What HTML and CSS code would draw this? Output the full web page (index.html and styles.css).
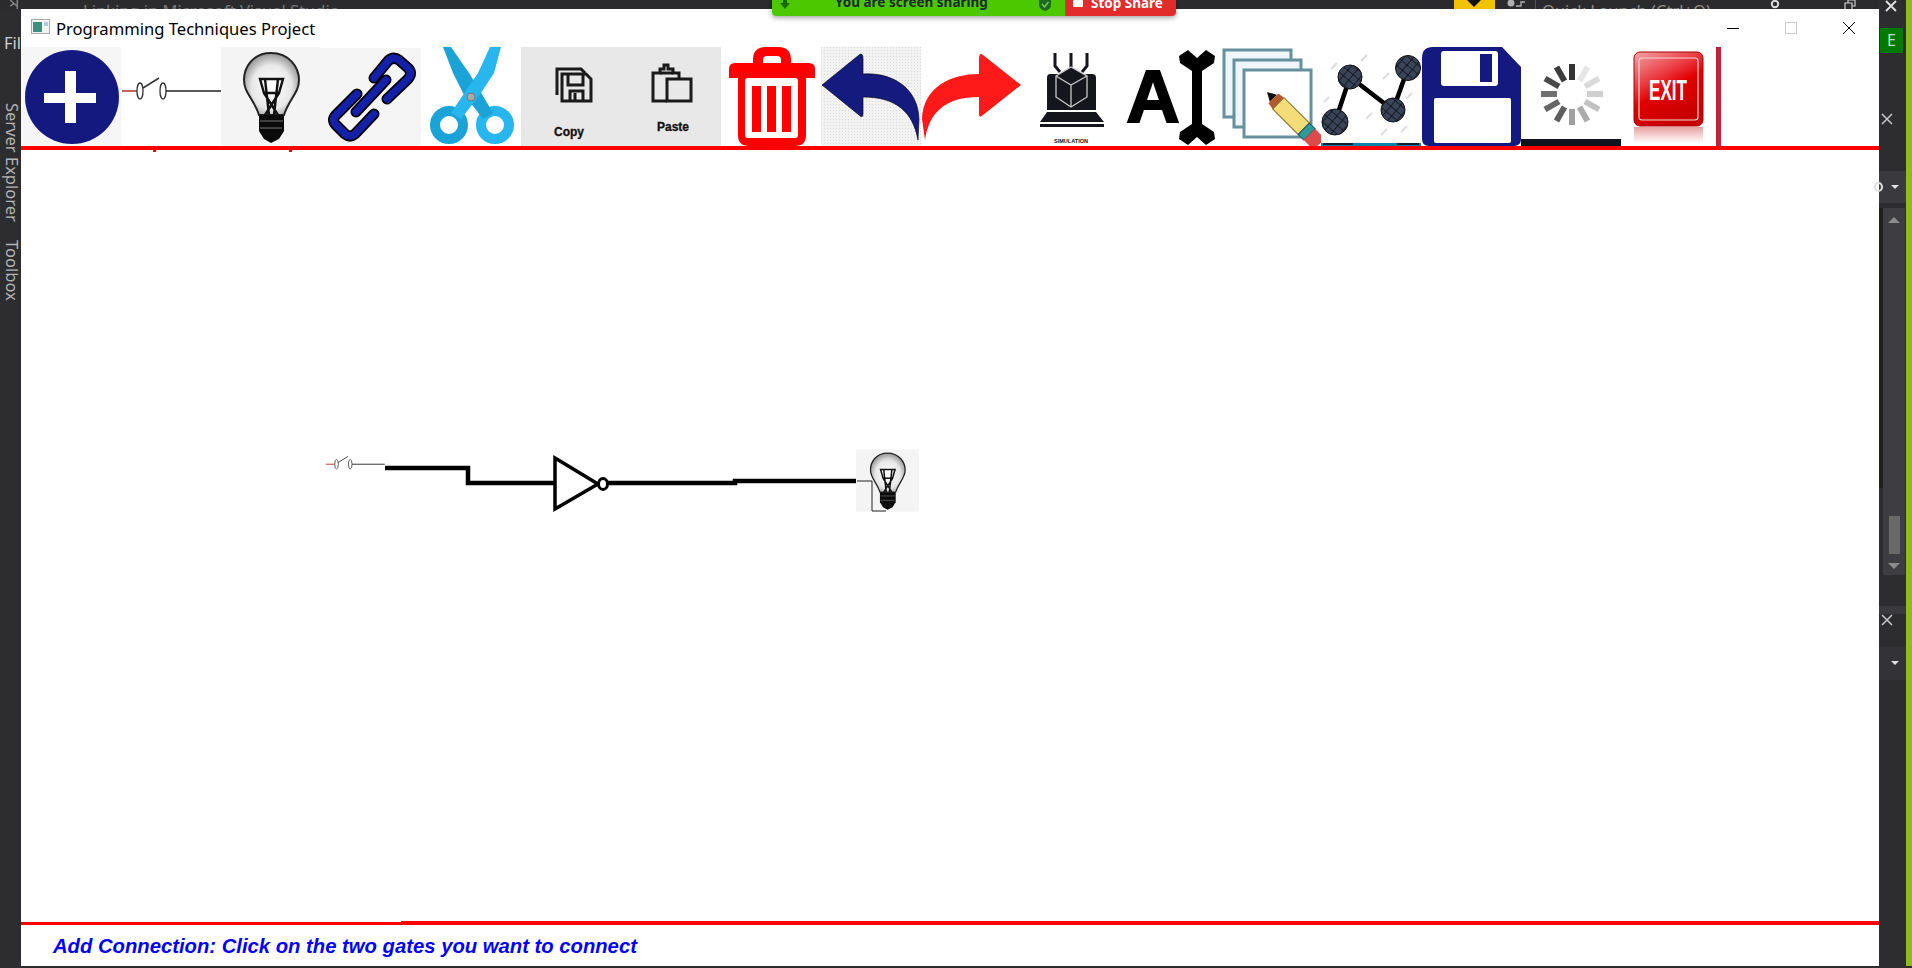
FILE: index.html
```html
<!DOCTYPE html>
<html lang="en">
<head>
    <meta charset="UTF-8">
    <title>Programming Techniques Project</title>
    <link rel="stylesheet" href="styles.css">
</head>
<body>
<!-- shared drawings, used by the toolbar and by the circuit -->
<svg class="defs" width="0" height="0">
    <defs>
        <radialGradient id="glass" cx="50%" cy="55%" r="60%">
            <stop offset="0" stop-color="#ffffff"/>
            <stop offset="0.6" stop-color="#e8e8e8"/>
            <stop offset="1" stop-color="#7e7e7e"/>
        </radialGradient>
        <linearGradient id="exitRed" x1="0" y1="0" x2="0.5" y2="1">
            <stop offset="0" stop-color="#f2a6aa"/>
            <stop offset="0.42" stop-color="#e9353b"/>
            <stop offset="0.6" stop-color="#e00000"/>
            <stop offset="1" stop-color="#c80000"/>
        </linearGradient>
        <linearGradient id="exitFade" x1="0" y1="0" x2="0" y2="1">
            <stop offset="0" stop-color="#e8a0a0"/>
            <stop offset="1" stop-color="#ffffff"/>
        </linearGradient>
        <pattern id="hatch" width="7" height="7" patternUnits="userSpaceOnUse" patternTransform="rotate(40)">
            <rect width="7" height="7" fill="#3a4459"/>
            <path d="M0 0H7M0 0V7" stroke="#0c0f18" stroke-width="1.6"/>
        </pattern>
        <symbol id="bulb" viewBox="0 0 100 99">
            <rect width="100" height="99" fill="#f4f4f4"/>
            <path d="M50 6C32 6 23 20 23 33C23 46 33 52 38 68L63 68C68 52 78 46 78 33C78 20 68 6 50 6Z" fill="url(#glass)" stroke="#222" stroke-width="2"/>
            <path d="M39 32L62 32L58 46L43 46Z M44 32L48 68M57 32L53 68M43 46L57 68M58 46L44 68" fill="none" stroke="#111" stroke-width="2.400"/>
            <path d="M38 68H63V84L58 92L50 96L43 92L38 84Z" fill="#0a0a0a"/>
            <path d="M39 74H62M39 81H61" stroke="#777" stroke-width="1"/>
        </symbol>
        <symbol id="switch" viewBox="0 0 100 99">
            <path d="M1 44H16" stroke="#a33" stroke-width="1.5"/>
            <ellipse cx="19" cy="44" rx="3" ry="8" fill="#fff" stroke="#333" stroke-width="1.3"/>
            <path d="M22 41L38 31" stroke="#333" stroke-width="1.5"/>
            <ellipse cx="42" cy="44" rx="3" ry="8" fill="#fff" stroke="#333" stroke-width="1.3"/>
            <path d="M45 44H100" stroke="#222" stroke-width="1.5"/>
        </symbol>
    </defs>
</svg>

<div class="vs-top">
    <svg class="vs-logo" viewBox="0 0 30 20"><path d="M4 0L20 14M4 14L12 8M20 0V20" fill="none" stroke="#8a8a8a" stroke-width="3"/></svg>
    <span class="vs-title">Linking in Microsoft Visual Studio</span>
    <span class="vs-notify"><i></i></span>
    <svg class="vs-person" viewBox="0 0 22 9"><circle cx="6" cy="3" r="3.5" fill="#b0b0b0"/><path d="M11 6H16V2H20" fill="none" stroke="#b0b0b0" stroke-width="1.3"/></svg>
    <span class="vs-search">Quick Launch (Ctrl+Q)</span>
    <svg class="vs-user" viewBox="0 0 12 9"><circle cx="6" cy="4" r="3.2" fill="none" stroke="#ddd" stroke-width="2"/></svg>
    <svg class="vs-restore" viewBox="0 0 12 9"><path d="M1 9V3H8V9M4 3V0H11V6H8" fill="none" stroke="#ccc" stroke-width="1.2"/></svg>
</div>

<div class="share-bar">
    <div class="share-info">
        <svg class="share-arrow" viewBox="0 0 10 12"><path d="M3 0H7V5H10L5 11L0 5H3Z" fill="#176b00"/></svg>
        <span class="share-text">You are screen sharing</span>
        <svg class="share-shield" viewBox="0 0 12 12"><path d="M0 0H12V6Q12 10 6 12Q0 10 0 6Z" fill="#1d6b22"/><path d="M3 5L5.500 8L9.500 3" fill="none" stroke="#7bcf5c" stroke-width="1.3"/></svg>
    </div>
    <div class="share-stop"><i></i>Stop Share</div>
</div>

<div class="desk">
    <div class="rail-left">
        <span class="rail-file">File</span>
        <span class="rail-tab">Server Explorer</span>
        <span class="rail-tab">Toolbox</span>
    </div>

    <div class="window">
        <div class="titlebar">
            <svg class="app-icon" viewBox="0 0 19 15">
                <rect x="0.5" y="0.5" width="18" height="14" fill="#f2f2f2" stroke="#a9a9a9"/>
                <rect x="2" y="3" width="9" height="10" fill="#3f8f7f"/>
                <rect x="13" y="3" width="4" height="4" fill="#b7c9d4"/>
            </svg>
            <span class="app-name">Programming Techniques Project</span>
            <div class="win-buttons">
                <svg viewBox="0 0 14 14"><path d="M1 7.500H13" stroke="#000"/></svg>
                <svg viewBox="0 0 14 14"><rect x="1.500" y="1.500" width="11" height="11" fill="none" stroke="#ccc"/></svg>
                <svg viewBox="0 0 14 14"><path d="M1 1L13 13M13 1L1 13" stroke="#000"/></svg>
            </div>
        </div>

        <div class="toolbar">
            <!-- add gate -->
            <svg class="tool" viewBox="0 0 100 99">
                <rect width="100" height="99" fill="#f6f6f6"/>
                <ellipse cx="51" cy="50" rx="47" ry="47" fill="#14197f"/>
                <path d="M23 46H44V24H55V46H75V56H55V76H44V56H23Z" fill="#fff"/>
            </svg>
            <svg class="tool" viewBox="0 0 100 99"><use href="#switch"/></svg>
            <svg class="tool" viewBox="0 0 100 99"><use href="#bulb"/></svg>
            <!-- connection -->
            <svg class="tool" viewBox="0 0 100 99">
                <rect y="1" width="100" height="98" fill="#f5f5f5"/>
                <g fill="none" stroke-linecap="round" stroke-linejoin="round">
                    <g stroke="#000" stroke-width="11">
                        <path d="M53 31L67 14Q72 9 78 13L87 21Q92 26 87 32L66 52"/>
                        <path d="M53 67L34 87Q29 91 24 87L15 78Q10 73 15 68L36 47"/>
                        <path d="M35 65L65 33"/>
                    </g>
                    <g stroke="#1420a8" stroke-width="7.500">
                        <path d="M53 31L67 14Q72 9 78 13L87 21Q92 26 87 32L66 52"/>
                        <path d="M53 67L34 87Q29 91 24 87L15 78Q10 73 15 68L36 47"/>
                        <path d="M35 65L65 33"/>
                    </g>
                </g>
            </svg>
            <!-- cut -->
            <svg class="tool" viewBox="0 0 100 99">
                <rect width="100" height="99" fill="#fff"/>
                <circle cx="28" cy="78" r="14" fill="none" stroke="#1ba3d8" stroke-width="10"/>
                <circle cx="74" cy="78" r="14" fill="none" stroke="#27b6ee" stroke-width="10"/>
                <path d="M22 0L30 0L48 26L58 42L72 66L62 72L42 46L32 26Z" fill="#1ba3d8"/>
                <path d="M80 0L69 0L57 26L46 42L30 66L40 72L60 46L73 26Z" fill="#27b6ee"/>
                <circle cx="50" cy="50" r="4" fill="#a9a9a9" stroke="#777"/>
            </svg>
            <!-- copy -->
            <svg class="tool" viewBox="0 0 100 99">
                <rect width="100" height="99" fill="#e8e8e8"/>
                <g fill="none" stroke="#1a1a1a" stroke-width="3">
                    <path d="M36 48V22H60L64 26"/>
                    <path d="M41 54V27H65L70 32V54Z"/>
                    <path d="M47 28V38H62V28M49 54V44H62V54M54 46V54"/>
                </g>
                <text class="tool-label" x="48" y="89">Copy</text>
            </svg>
            <!-- paste -->
            <svg class="tool" viewBox="0 0 100 99">
                <rect width="100" height="99" fill="#e8e8e8"/>
                <g fill="none" stroke="#1a1a1a" stroke-width="3">
                    <path d="M46 54H32V26H39V22H43V18H47V22H52V26H58V31"/>
                    <rect x="46" y="32" width="24" height="22"/>
                    <path d="M39 26H52"/>
                </g>
                <text class="tool-label" x="52" y="84">Paste</text>
            </svg>
            <!-- delete -->
            <svg class="tool" viewBox="0 0 100 99">
                <rect width="100" height="99" fill="#fff"/>
                <path d="M32 20V13Q32 0 45 0H57Q70 0 70 13V20H60V13Q60 9 56 9H46Q42 9 42 13V20Z" fill="#f00"/>
                <path d="M14 16H88Q94 16 94 22V31H8V22Q8 16 14 16Z" fill="#f00"/>
                <path d="M17 29H85V88Q85 99 74 99H28Q17 99 17 88Z" fill="#f00"/>
                <rect x="24" y="31" width="53" height="60" rx="3" fill="#fff"/>
                <path d="M31 39H40V85H31ZM46 39H55V85H46ZM61 39H70V85H61Z" fill="#f00"/>
            </svg>
            <!-- undo -->
            <svg class="tool" viewBox="0 0 100 99">
                <defs>
                    <pattern id="dots" width="3" height="3" patternUnits="userSpaceOnUse">
                        <rect width="3" height="3" fill="#f2f2f2"/>
                        <rect width="1" height="1" fill="#dcdcdc"/>
                    </pattern>
                </defs>
                <rect width="100" height="99" fill="url(#dots)"/>
                <path d="M1 38L38 8Q42 5 42 12L42 27C70 25 97 40 98 72L97 93C92 65 75 50 42 50L42 67Q42 72 38 68Z" fill="#151a7e" stroke="#000" stroke-width="0.600"/>
            </svg>
            <!-- redo -->
            <svg class="tool" viewBox="0 0 100 99">
                <rect width="100" height="99" fill="#fff"/>
                <path d="M100 38L62 8Q58 5 58 12L58 27C30 27 2 40 1 72L4 93C8 65 25 50 58 50L58 67Q58 72 62 68Z" fill="#ff1a1a"/>
            </svg>
            <!-- simulation -->
            <svg class="tool" viewBox="0 0 100 99">
                <rect width="100" height="99" fill="#fff"/>
                <path d="M34 6V19L39 25M50 6V21M66 6V19L61 25" fill="none" stroke="#15151c" stroke-width="3"/>
                <path d="M29 27H71Q75 27 75 31V63H26V31Q26 27 29 27Z" fill="#15151c"/>
                <path d="M50 20L66 29V50L50 60L35 50V29Z" fill="#15151c" stroke="#c9c9c9" stroke-width="1.300"/>
                <path d="M35 29L50 38L66 29M50 38V60" fill="none" stroke="#c9c9c9" stroke-width="1.300"/>
                <path d="M26 65H75L83 75H19Z" fill="#15151c"/>
                <rect x="19" y="77" width="64" height="3" fill="#15151c"/>
                <text class="sim-label" x="50" y="96">SIMULATION</text>
            </svg>
            <!-- label -->
            <svg class="tool" viewBox="0 0 100 99">
                <rect width="100" height="99" fill="#fff"/>
                <text class="label-a" x="32" y="75">A</text>
                <path d="M58 9L67 3L76 11L85 3L94 9L93 16L81 24V77L93 85L94 92L85 98L76 90L67 98L58 92L59 85L71 77V24L59 16Z" fill="#000"/>
            </svg>
            <!-- edit -->
            <svg class="tool" viewBox="0 0 100 99">
                <rect width="100" height="99" fill="#fff"/>
                <g stroke="#65909c" stroke-width="3">
                    <rect x="3" y="3" width="67" height="67" fill="#eef6fc"/>
                    <rect x="13" y="13" width="67" height="67" fill="#eef6fc"/>
                    <rect x="23" y="23" width="67" height="67" fill="#fff"/>
                </g>
                <g transform="translate(46 45) rotate(45)">
                    <path d="M0 0L9 -5V5Z" fill="#111"/>
                    <path d="M9 -7L16 -8V8L9 7Z" fill="#b5592e"/>
                    <rect x="16" y="-8" width="36" height="16" fill="#f4dc78" stroke="#7d6a28"/>
                    <rect x="52" y="-8" width="8" height="16" fill="#2f9c93" stroke="#1e4e70"/>
                    <path d="M60 -8H68Q74 -6 74 0Q74 6 68 8H60Z" fill="#dc4a4a"/>
                </g>
            </svg>
            <!-- graph -->
            <svg class="tool" viewBox="0 0 100 99">
                <rect width="100" height="99" fill="#fff"/>
                <path d="M10 22L16 16M40 14L46 8M62 32L68 26M85 52L91 46M60 88L66 82M8 50L3 55M45 72L51 66M80 85L86 79" stroke="#ddd" stroke-width="2"/>
                <path d="M14 75L29 30L72 63L87 21" fill="none" stroke="#000" stroke-width="4.500"/>
                <g fill="url(#hatch)" stroke="#111" stroke-width="1">
                    <circle cx="29" cy="30" r="12"/>
                    <circle cx="14" cy="75" r="13"/>
                    <circle cx="72" cy="63" r="12"/>
                    <circle cx="87" cy="21" r="12.500"/>
                </g>
                <rect y="96" width="100" height="3" fill="#0e7fa8"/>
                <path d="M2 97H32M76 97H98" stroke="#0b2034" stroke-width="2"/>
            </svg>
            <!-- save -->
            <svg class="tool" viewBox="0 0 100 99">
                <rect width="100" height="99" fill="#fff"/>
                <path d="M12 0H81L100 20V92Q100 99 93 99H8Q1 99 1 92V11Q1 0 12 0Z" fill="#14197f"/>
                <rect x="20" y="4" width="57" height="35" rx="3" fill="#fff"/>
                <rect x="59" y="7" width="12" height="28" fill="#14197f"/>
                <rect x="13" y="51" width="77" height="45" rx="2" fill="#fff"/>
            </svg>
            <!-- load -->
            <svg class="tool" viewBox="0 0 100 99">
                <rect width="100" height="99" fill="#fff"/>
                <g stroke-width="6">
                    <path d="M51 33V17" stroke="#333"/>
                    <path d="M58.500 34L66.500 20" stroke="#e6e6e6"/>
                    <path d="M64 39.500L78 31.500" stroke="#dadada"/>
                    <path d="M66 47H82" stroke="#cfcfcf"/>
                    <path d="M64 54.500L78 62.500" stroke="#c2c2c2"/>
                    <path d="M58.500 60L66.500 74" stroke="#ababab"/>
                    <path d="M51 62V78" stroke="#a0a0a0"/>
                    <path d="M43.500 60L35.500 74" stroke="#5e5e5e"/>
                    <path d="M38 54.500L24 62.500" stroke="#666"/>
                    <path d="M36 47H20" stroke="#707070"/>
                    <path d="M38 39.500L24 31.500" stroke="#4a4a4a"/>
                    <path d="M43.500 34L35.500 20" stroke="#3c3c3c"/>
                </g>
                <rect y="92" width="100" height="7" fill="#11131c"/>
            </svg>
            <!-- exit -->
            <svg class="tool" viewBox="0 0 100 99">
                <rect width="100" height="99" fill="#fff"/>
                <rect x="13" y="80" width="69" height="16" fill="url(#exitFade)"/>
                <rect x="13" y="5" width="69" height="74" rx="6" fill="url(#exitRed)" stroke="#a80000"/>
                <rect x="18" y="11" width="59" height="62" rx="3" fill="none" stroke="#f6d6d6" stroke-width="1.200"/>
                <text class="exit-label" x="47" y="53" textLength="38" lengthAdjust="spacingAndGlyphs">EXIT</text>
                <rect x="95" width="5" height="99" fill="#c8203a"/>
            </svg>
        </div>
        <div class="toolbar-line"><i></i><i></i></div>

        <div class="canvas">
            <!-- viewBox keeps screen coordinates, the nodes sit free on this sheet -->
            <svg class="circuit" viewBox="21 150 1858 771">
                <use href="#switch" x="325" y="438" width="60" height="59"/>
                <path d="M385 468H468V483H555" fill="none" stroke="#000" stroke-width="4.500"/>
                <path d="M555 458L598 484L555 509Z" fill="#fff" stroke="#000" stroke-width="3.500"/>
                <ellipse cx="603" cy="484" rx="4.500" ry="5.500" fill="#fff" stroke="#000" stroke-width="3"/>
                <path d="M608 483H735V481H857" fill="none" stroke="#000" stroke-width="4.500"/>
                <use href="#bulb" x="856" y="449" width="63" height="63"/>
                <path d="M857 481H872V511H886" fill="none" stroke="#222" stroke-width="1"/>
            </svg>
        </div>

        <div class="statusbar">
            <span class="status-text">Add Connection: Click on the two gates you want to connect</span>
        </div>
    </div>

    <div class="rail-right">
        <div class="rail-panel">
            <svg class="rail-x top-x" viewBox="0 0 12 12"><path d="M1 1L11 11M11 1L1 11" stroke="#e0e0e0" stroke-width="1.800"/></svg>
            <span class="rail-e">E</span>
            <svg class="rail-x pane-x" viewBox="0 0 12 12"><path d="M1 1L11 11M11 1L1 11" stroke="#c8c8c8" stroke-width="1.500"/></svg>
            <div class="rail-combo"><b></b><i></i></div>
            <div class="rail-scroll">
                <i class="arrow-up"></i>
                <i class="thumb"></i>
                <i class="arrow-down"></i>
            </div>
            <div class="rail-sep"></div>
            <svg class="rail-x pane-x2" viewBox="0 0 12 12"><path d="M1 1L11 11M11 1L1 11" stroke="#c8c8c8" stroke-width="1.500"/></svg>
            <div class="rail-combo low"><i></i></div>
        </div>
        <div class="rail-lime"></div>
    </div>
</div>
</body>
</html>
```

FILE: styles.css
```css
html, body {
    margin: 0;
    padding: 0;
}
body {
    position: relative;
    width: 1912px;
    height: 968px;
    overflow: hidden;
    background: #2d2d30;
    font-family: "Noto Sans", "Liberation Sans", sans-serif;
}
.defs {
    position: absolute;
}

/* visual studio behind the window */
.vs-top {
    display: flex;
    align-items: flex-start;
    height: 9px;
    overflow: hidden;
    background: #2b2b2e;
    color: #8b8b8b;
    font-size: 16.500px;
    line-height: 22px;
}
.vs-logo {
    width: 14px;
    height: 9px;
    margin-left: 8px;
    flex: none;
}
.vs-title {
    height: 9px;
    margin-left: 61px;
    width: 1371px;
    flex: none;
    overflow: hidden;
    color: #77777a;
}
.vs-notify {
    position: relative;
    width: 41px;
    height: 9px;
    background: #f2c200;
    flex: none;
}
.vs-notify i {
    position: absolute;
    left: 13px;
    top: 0;
    border: 7px solid transparent;
    border-top-color: #111;
    border-bottom: 0;
}
.vs-person {
    width: 22px;
    height: 9px;
    margin-left: 10px;
    flex: none;
}
.vs-search {
    height: 9px;
    margin-left: 8px;
    padding-left: 6px;
    border-left: 1px solid #555;
    width: 219px;
    flex: none;
    overflow: hidden;
    color: #8b8b8b;
    white-space: nowrap;
}
.vs-user {
    width: 12px;
    height: 9px;
    margin-left: 8px;
    flex: none;
}
.vs-restore {
    width: 12px;
    height: 9px;
    margin-left: 63px;
    flex: none;
}

/* zoom bar lies over everything */
.share-bar {
    position: absolute;
    left: 772px;
    top: 0;
    display: flex;
    width: 404px;
    height: 16px;
    border-radius: 0 0 4px 4px;
    overflow: hidden;
    box-shadow: 0 2px 5px rgba(0, 0, 0, 0.35);
    font-size: 13.500px;
    font-weight: bold;
    line-height: 16px;
}
.share-info {
    display: flex;
    width: 293px;
    background: #4bc800;
    color: #1c2a30;
}
.share-arrow {
    width: 10px;
    height: 12px;
    margin: -2px 0 0 8px;
}
.share-text {
    margin: -6px 0 0 45px;
    width: 159px;
}
.share-shield {
    width: 12px;
    height: 12px;
    margin: -1px 0 0 45px;
}
.share-stop {
    display: flex;
    flex: 1;
    background: #e32b2b;
    color: #fff;
    line-height: 7px;
}
.share-stop i {
    width: 10px;
    height: 7px;
    margin: 0 8px 0 8px;
    border-radius: 1px;
    background: #fff;
}

/* three columns */
.desk {
    display: flex;
    height: 957px;
}
.rail-left {
    display: flex;
    flex-direction: column;
    width: 21px;
    flex: none;
    overflow: hidden;
    color: #b4b4b4;
    font-size: 16.500px;
}
.rail-file {
    margin: 23px 0 0 4px;
    color: #cfcfcf;
    line-height: 22px;
    white-space: nowrap;
}
.rail-tab {
    writing-mode: vertical-rl;
    margin: 0 0 0 5px;
    white-space: nowrap;
    line-height: 18px;
}
.rail-file + .rail-tab {
    margin-top: 49px;
}
.rail-tab + .rail-tab {
    margin-top: 18px;
}

.window {
    display: flex;
    flex-direction: column;
    width: 1858px;
    flex: none;
    background: #fff;
}
.titlebar {
    display: flex;
    align-items: center;
    height: 38px;
    flex: none;
}
.app-icon {
    width: 19px;
    height: 15px;
    margin: 0 0 4px 10px;
}
.app-name {
    margin: 0 0 0 6px;
    color: #000;
    font-size: 16.600px;
    white-space: nowrap;
}
.win-buttons {
    display: flex;
    gap: 44px;
    margin: 0 0 0 auto;
    padding-right: 23px;
}
.win-buttons svg {
    width: 14px;
    height: 14px;
}
.toolbar {
    display: flex;
    height: 99px;
    flex: none;
}
.tool {
    display: block;
    width: 100px;
    height: 99px;
    flex: none;
}
.tool-label {
    font-family: "Liberation Sans", sans-serif;
    font-size: 12px;
    font-weight: bold;
    text-anchor: middle;
    fill: #111;
    stroke: #111;
    stroke-width: 0.3px;
}
.sim-label {
    font-family: "Liberation Sans", sans-serif;
    font-size: 5.500px;
    font-weight: bold;
    text-anchor: middle;
    fill: #111;
}
.label-a {
    font-family: "Liberation Sans", sans-serif;
    font-size: 74px;
    font-weight: bold;
    text-anchor: middle;
    fill: #000;
    stroke: #000;
    stroke-width: 2px;
}
.exit-label {
    font-family: "Liberation Sans", sans-serif;
    font-size: 30px;
    font-weight: bold;
    text-anchor: middle;
    fill: #fff;
}
.toolbar-line {
    position: relative;
    height: 4px;
    flex: none;
    background: #f00;
}
.toolbar-line i {
    position: absolute;
    top: 4px;
    left: 132px;
    width: 3px;
    height: 2px;
    background: #f00;
}
.toolbar-line i + i {
    left: 268px;
}
.canvas {
    flex: 1;
    min-height: 0;
}
.circuit {
    display: block;
    width: 1858px;
    height: 771px;
}
.statusbar {
    position: relative;
    height: 45px;
    flex: none;
    box-sizing: border-box;
    border-top: 4px solid #f00;
    padding: 10px 0 0 32px;
}
.statusbar::before {
    content: "";
    position: absolute;
    left: 0;
    top: -4px;
    width: 380px;
    height: 1px;
    background: #fff;
}
.status-text {
    color: #0000ff;
    font-family: "Liberation Sans", sans-serif;
    font-size: 20.250px;
    font-style: italic;
    font-weight: bold;
    white-space: nowrap;
}

.rail-right {
    display: flex;
    flex: 1;
}
.rail-panel {
    display: flex;
    flex-direction: column;
    flex: 1;
    background: #2d2d30;
    margin-top: -9px;
}
.rail-lime {
    width: 6px;
    margin-top: -9px;
    background: #8bbd22;
}
.rail-x {
    display: block;
    flex: none;
    width: 12px;
    height: 12px;
}
.top-x {
    margin: 0 0 0 6px;
}
.rail-e {
    flex: none;
    width: 23px;
    height: 25px;
    margin: 16px 0 0 1px;
    background: #007a00;
    color: #bfe3bf;
    font-size: 16px;
    line-height: 25px;
    text-align: center;
}
.pane-x {
    margin: 60px 0 0 2px;
}
.rail-combo {
    position: relative;
    flex: none;
    height: 32px;
    margin: 46px 0 0 0;
    background: #3a3a3e;
}
.rail-combo b {
    position: absolute;
    left: -5px;
    top: 11px;
    width: 9px;
    height: 10px;
    box-sizing: border-box;
    border: 2px solid #e0e0e0;
    border-radius: 50%;
}
.rail-combo i {
    position: absolute;
    right: 7px;
    top: 14px;
    border: 4px solid transparent;
    border-top-color: #e0e0e0;
    border-bottom: 0;
}
.rail-scroll {
    position: relative;
    display: flex;
    flex-direction: column;
    align-items: center;
    flex: none;
    width: 22px;
    height: 367px;
    margin: 5px 0 0 4px;
    background: #3e3e42;
}
.rail-scroll::before {
    content: "";
    position: absolute;
    left: -4px;
    top: 0;
    width: 4px;
    height: 280px;
    background: #1f1f1f;
}
.arrow-up {
    margin-top: 9px;
    border: 6px solid transparent;
    border-bottom-color: #8a8a8a;
    border-top: 0;
}
.thumb {
    width: 11px;
    height: 38px;
    margin-top: 293px;
    background: #686868;
}
.arrow-down {
    margin-top: 9px;
    border: 6px solid transparent;
    border-top-color: #8a8a8a;
    border-bottom: 0;
}
.rail-sep {
    flex: none;
    height: 8px;
    margin-top: 31px;
    background: #3a3a3e;
}
.pane-x2 {
    margin: 0 0 0 2px;
}
.rail-combo.low {
    height: 33px;
    margin-top: 21px;
    background: #333337;
}
```
